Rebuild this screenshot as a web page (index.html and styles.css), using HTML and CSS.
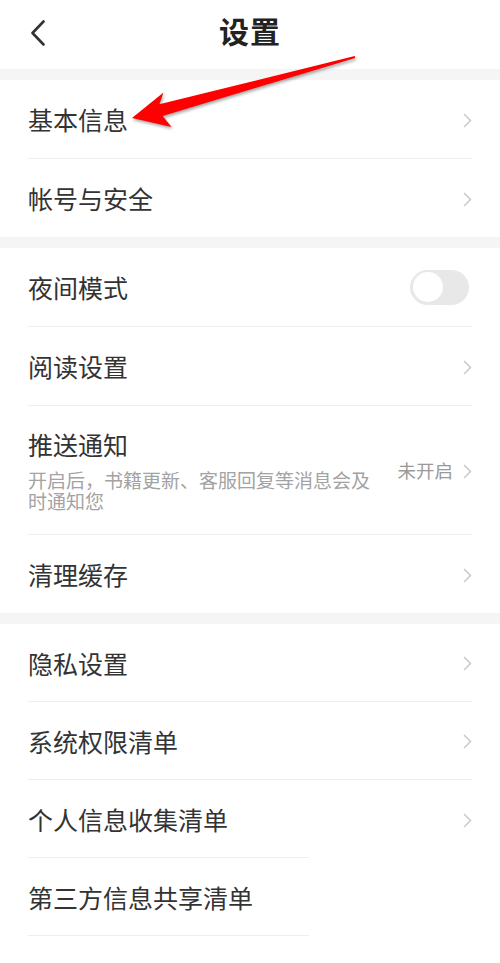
FILE: index.html
```html
<!DOCTYPE html>
<html lang="zh-CN">
<head>
  <meta charset="UTF-8">
  <meta name="viewport" content="width=device-width, initial-scale=1.0">
  <title>设置</title>
  <link rel="stylesheet" href="styles.css">
</head>
<body>
  <div class="page">
    <header class="topbar">
      <span class="back">
        <svg width="16" height="26" viewBox="0 0 16 26"><path d="M13.5 1.5 L2.5 13 L13.5 24.5" fill="none" stroke="#333" stroke-width="2.6" stroke-linecap="round" stroke-linejoin="round"/></svg>
      </span>
      <h1 class="title">设置</h1>
      <span></span>
    </header>

    <div class="gap"></div>

    <section class="group">
      <div class="row">
        <span class="label">基本信息</span>
        <span class="chev"><svg width="9" height="15" viewBox="0 0 9 15"><path d="M1 1 L7.5 7.5 L1 14" fill="none" stroke="#cacaca" stroke-width="1.5"/></svg></span>
      </div>
      <div class="row">
        <span class="label">帐号与安全</span>
        <span class="chev"><svg width="9" height="15" viewBox="0 0 9 15"><path d="M1 1 L7.5 7.5 L1 14" fill="none" stroke="#cacaca" stroke-width="1.5"/></svg></span>
      </div>
    </section>

    <div class="gap"></div>

    <section class="group">
      <div class="row">
        <span class="label">夜间模式</span>
        <span class="switch"><span class="knob"></span></span>
      </div>
      <div class="row">
        <span class="label">阅读设置</span>
        <span class="chev"><svg width="9" height="15" viewBox="0 0 9 15"><path d="M1 1 L7.5 7.5 L1 14" fill="none" stroke="#cacaca" stroke-width="1.5"/></svg></span>
      </div>
      <div class="row row-tall">
        <div class="text-col">
          <div class="label">推送通知</div>
          <div class="desc">开启后，书籍更新、客服回复等消息会及时通知您</div>
        </div>
        <div class="extra">
          <span class="value">未开启</span>
          <span class="chev"><svg width="9" height="15" viewBox="0 0 9 15"><path d="M1 1 L7.5 7.5 L1 14" fill="none" stroke="#cacaca" stroke-width="1.5"/></svg></span>
        </div>
      </div>
      <div class="row">
        <span class="label">清理缓存</span>
        <span class="chev"><svg width="9" height="15" viewBox="0 0 9 15"><path d="M1 1 L7.5 7.5 L1 14" fill="none" stroke="#cacaca" stroke-width="1.5"/></svg></span>
      </div>
    </section>

    <div class="gap"></div>

    <section class="group group-compact">
      <div class="row">
        <span class="label">隐私设置</span>
        <span class="chev"><svg width="9" height="15" viewBox="0 0 9 15"><path d="M1 1 L7.5 7.5 L1 14" fill="none" stroke="#cacaca" stroke-width="1.5"/></svg></span>
      </div>
      <div class="row">
        <span class="label">系统权限清单</span>
        <span class="chev"><svg width="9" height="15" viewBox="0 0 9 15"><path d="M1 1 L7.5 7.5 L1 14" fill="none" stroke="#cacaca" stroke-width="1.5"/></svg></span>
      </div>
      <div class="row row-short">
        <span class="label">个人信息收集清单</span>
        <span class="chev"><svg width="9" height="15" viewBox="0 0 9 15"><path d="M1 1 L7.5 7.5 L1 14" fill="none" stroke="#cacaca" stroke-width="1.5"/></svg></span>
      </div>
      <div class="row row-short">
        <span class="label">第三方信息共享清单</span>
      </div>
    </section>

    <!-- annotation arrow drawn over the list -->
    <svg class="arrow" width="500" height="140" viewBox="0 0 500 140">
      <polygon points="132,118 171.5,127 162.6,115.9 355.3,58 354.7,56 159.4,104.3 163.5,92.5" fill="#ff0000"/>
    </svg>
  </div>
</body>
</html>
```

FILE: styles.css
```css
* {
  box-sizing: border-box;
}

body {
  margin: 0;
  background: #fff;
  font-family: "Noto Sans CJK SC", "Noto Sans", sans-serif;
  color: #333;
}

.page {
  position: relative;
  width: 500px;
  min-height: 963px;
  background: #fff;
}

/* Top bar */
.topbar {
  height: 69px;
  display: grid;
  grid-template-columns: 1fr auto 1fr;
  align-items: center;
  padding-bottom: 9px;
}

.back {
  display: flex;
  align-items: center;
  padding-left: 30px;
  padding-top: 6px;
}

.title {
  margin: 0;
  font-size: 30px;
  font-weight: 700;
  color: #222;
  letter-spacing: 1px;
  line-height: 1;
}

.gap {
  height: 11px;
  background: #f5f5f5;
}

/* List groups */
.group {
  padding: 0 28px;
}

.row {
  height: 79px;
  display: flex;
  align-items: center;
  justify-content: space-between;
  border-bottom: 1px solid #efefef;
}

.row:last-child {
  height: 78px;
  border-bottom: none;
}

.group-compact .row {
  height: 78px;
}

.row-short,
.group-compact .row-short {
  border-bottom: none;
  background: linear-gradient(#efefef, #efefef) left bottom / 281px 1px no-repeat;
}

.label {
  font-size: 25px;
  line-height: 30px;
  color: #333;
}

.chev {
  display: flex;
  align-items: center;
  padding-top: 2px;
}

.row-tall {
  height: 129px;
  padding: 23px 0 23px;
}

.text-col {
  width: 350px;
}

.text-col .label {
  margin-bottom: 10px;
}

.desc {
  font-size: 19px;
  line-height: 21px;
  color: #a3a3a3;
}

.extra {
  display: flex;
  align-items: center;
  gap: 10px;
}

.value {
  font-size: 18.5px;
  color: #9a9a9a;
}

/* Toggle */
.switch {
  width: 59px;
  height: 35px;
  border-radius: 18px;
  background: #e8e8e8;
  display: flex;
  align-items: center;
  padding-left: 3px;
  margin-right: 3px;
}

.knob {
  width: 30px;
  height: 30px;
  border-radius: 50%;
  background: #fff;
}

/* Annotation overlay */
.arrow {
  position: absolute;
  left: 0;
  top: 0;
  pointer-events: none;
  filter: drop-shadow(1px 2px 1.5px rgba(0, 0, 0, 0.35));
}
```
